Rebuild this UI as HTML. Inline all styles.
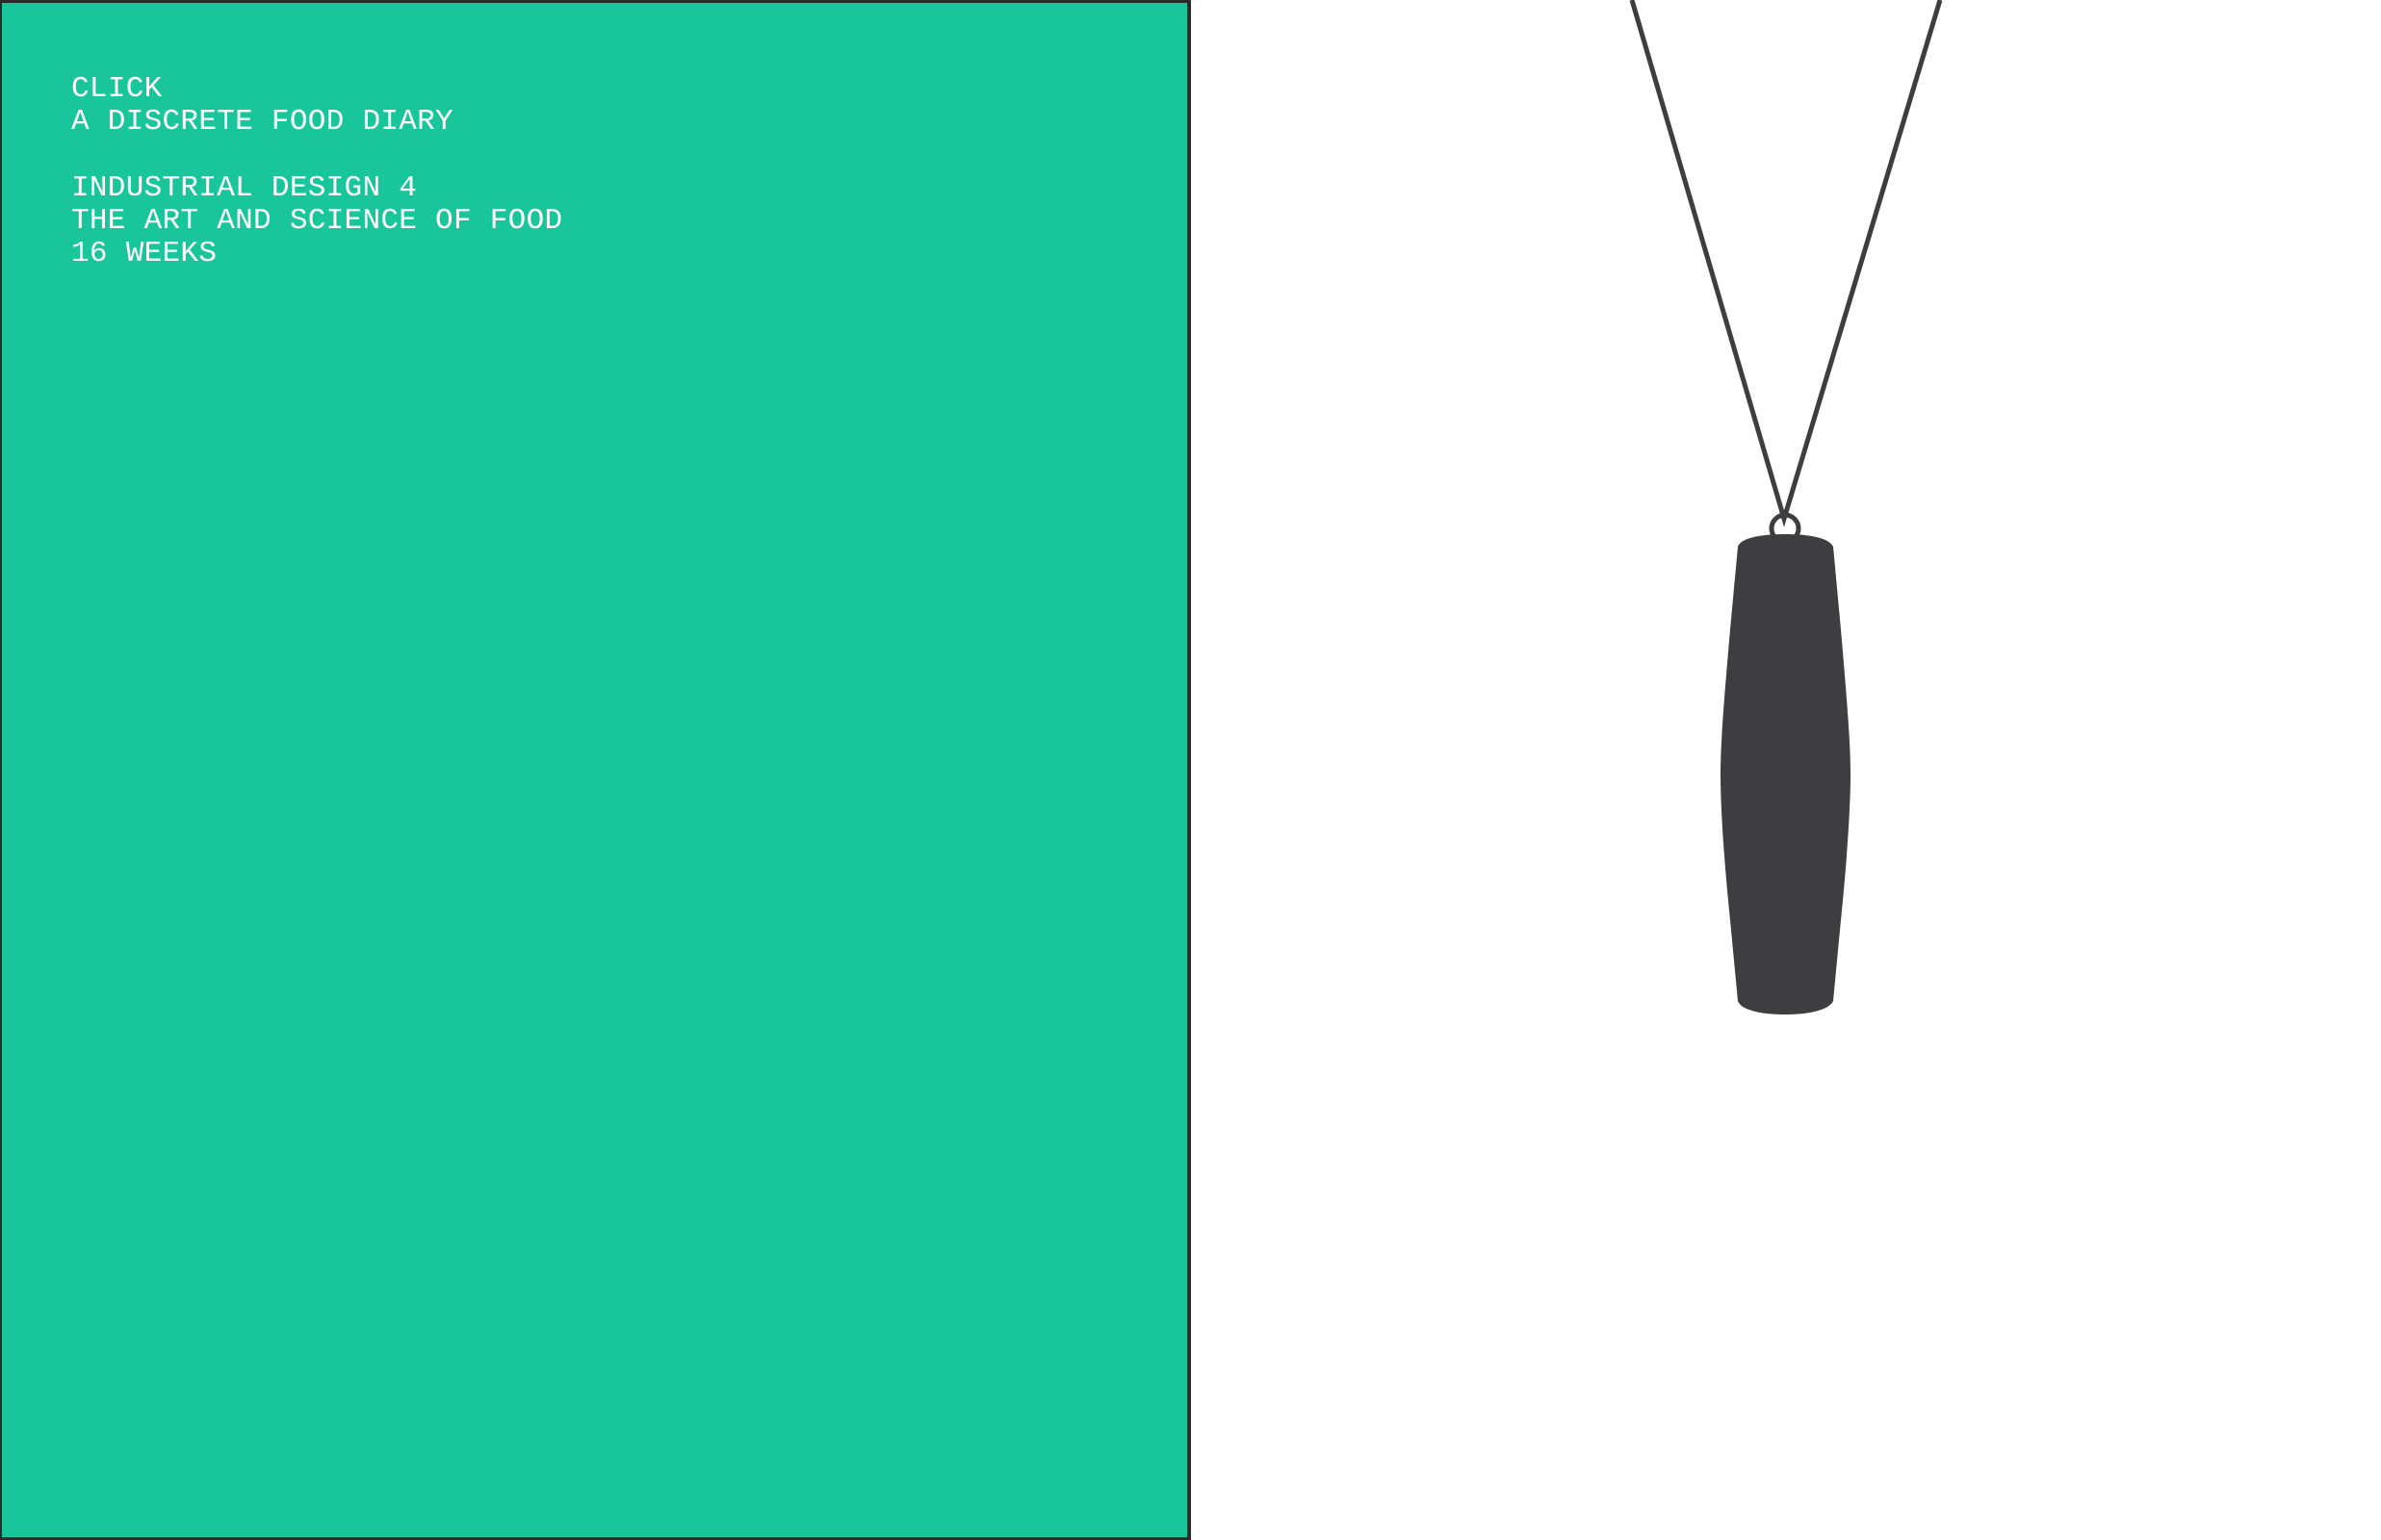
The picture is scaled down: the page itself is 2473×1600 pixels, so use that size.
<!DOCTYPE html>
<html><head><meta charset="utf-8"><style>
html,body{margin:0;padding:0;background:#fff;width:2473px;height:1600px;overflow:hidden;position:relative}
.panel{position:absolute;left:0;top:0;background:#19c69b;border-top:3px solid #2a2a2a;border-left:2px solid #2a2a2a;border-right:4px solid #2a2a2a;border-bottom:3px solid #2a2a2a;box-sizing:border-box;width:1237px;height:1600px}
.txt{position:absolute;left:74px;top:76px;color:#fff;font-family:"Liberation Mono",monospace;font-size:31px;line-height:34.3px;white-space:pre;letter-spacing:0.3px}
svg{position:absolute;left:0;top:0}
</style></head><body>
<div class="panel"></div>
<div class="txt">CLICK
A DISCRETE FOOD DIARY

INDUSTRIAL DESIGN 4
THE ART AND SCIENCE OF FOOD
16 WEEKS</div>
<svg width="2473" height="1600" viewBox="0 0 2473 1600">
<g stroke="#3e3e40" stroke-width="5" fill="none">
<path d="M1695 0 L1853 539 L2015 0"/>
<circle cx="1854" cy="549" r="14"/>
</g>
<path fill="#3e3e40" d="M1854 555 C1880 555 1900 559 1904 568 L1912 654 C1918 724 1922 770 1922 805 C1922 840 1918 898 1912 956 L1904 1040 C1900 1049 1880 1054 1854 1054 C1828 1054 1808 1049 1805 1040 L1797 956 C1791 898 1787 840 1787 805 C1787 770 1791 724 1797 654 L1805 568 C1808 559 1828 555 1854 555 Z"/>
</svg>
</body></html>
